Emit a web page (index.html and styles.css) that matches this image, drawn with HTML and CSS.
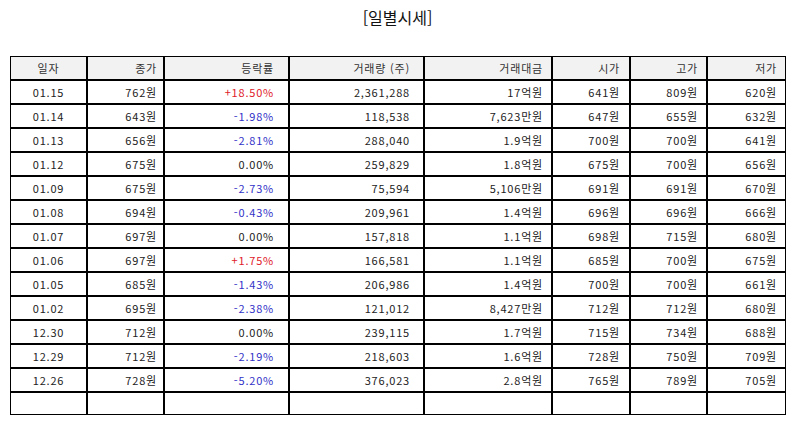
FILE: index.html
```html
<!DOCTYPE html>
<html lang="ko">
<head>
<meta charset="utf-8">
<title>일별시세</title>
<link rel="stylesheet" href="styles.css">
</head>
<body>
<div class="page">
  <h1 class="title">[일별시세]</h1>
  <table class="quotes">
    <colgroup>
      <col class="c-date"><col class="c-close"><col class="c-rate"><col class="c-vol">
      <col class="c-amt"><col class="c-open"><col class="c-high"><col class="c-low">
    </colgroup>
    <thead>
      <tr>
        <th>일자</th>
        <th>종가</th>
        <th>등락률</th>
        <th>거래량 (주)</th>
        <th>거래대금</th>
        <th>시가</th>
        <th>고가</th>
        <th>저가</th>
      </tr>
    </thead>
    <tbody>
      <tr><td>01.15</td><td>762원</td><td class="up">+18.50%</td><td>2,361,288</td><td>17억원</td><td>641원</td><td>809원</td><td>620원</td></tr>
      <tr><td>01.14</td><td>643원</td><td class="down">-1.98%</td><td>118,538</td><td>7,623만원</td><td>647원</td><td>655원</td><td>632원</td></tr>
      <tr><td>01.13</td><td>656원</td><td class="down">-2.81%</td><td>288,040</td><td>1.9억원</td><td>700원</td><td>700원</td><td>641원</td></tr>
      <tr><td>01.12</td><td>675원</td><td>0.00%</td><td>259,829</td><td>1.8억원</td><td>675원</td><td>700원</td><td>656원</td></tr>
      <tr><td>01.09</td><td>675원</td><td class="down">-2.73%</td><td>75,594</td><td>5,106만원</td><td>691원</td><td>691원</td><td>670원</td></tr>
      <tr><td>01.08</td><td>694원</td><td class="down">-0.43%</td><td>209,961</td><td>1.4억원</td><td>696원</td><td>696원</td><td>666원</td></tr>
      <tr><td>01.07</td><td>697원</td><td>0.00%</td><td>157,818</td><td>1.1억원</td><td>698원</td><td>715원</td><td>680원</td></tr>
      <tr><td>01.06</td><td>697원</td><td class="up">+1.75%</td><td>166,581</td><td>1.1억원</td><td>685원</td><td>700원</td><td>675원</td></tr>
      <tr><td>01.05</td><td>685원</td><td class="down">-1.43%</td><td>206,986</td><td>1.4억원</td><td>700원</td><td>700원</td><td>661원</td></tr>
      <tr><td>01.02</td><td>695원</td><td class="down">-2.38%</td><td>121,012</td><td>8,427만원</td><td>712원</td><td>712원</td><td>680원</td></tr>
      <tr><td>12.30</td><td>712원</td><td>0.00%</td><td>239,115</td><td>1.7억원</td><td>715원</td><td>734원</td><td>688원</td></tr>
      <tr><td>12.29</td><td>712원</td><td class="down">-2.19%</td><td>218,603</td><td>1.6억원</td><td>728원</td><td>750원</td><td>709원</td></tr>
      <tr><td>12.26</td><td>728원</td><td class="down">-5.20%</td><td>376,023</td><td>2.8억원</td><td>765원</td><td>789원</td><td>705원</td></tr>
      <tr class="empty"><td></td><td></td><td></td><td></td><td></td><td></td><td></td><td></td></tr>
    </tbody>
  </table>
</div>
</body>
</html>
```

FILE: styles.css
```css
html, body {
  margin: 0;
  padding: 0;
  background: #ffffff;
}

.page {
  padding: 6px 10px 0 10px;
  font-family: "Noto Sans CJK KR", "Noto Sans", sans-serif;
  color: #222222;
}

.title {
  margin: 0 0 28px 0;
  font-size: 16px;
  line-height: 22px;
  font-weight: normal;
  text-align: center;
  color: #111111;
}

.quotes {
  width: 776px;
  table-layout: fixed;
  border-collapse: separate;
  border-spacing: 0;
  border: 0;
  font-size: 11px;
  letter-spacing: 0.8px;
}

.c-date { width: 77px; }
.c-close { width: 77px; }
.c-rate { width: 125px; }
.c-vol { width: 135px; }
.c-amt { width: 128px; }
.c-open { width: 78px; }
.c-high { width: 77px; }
.c-low { width: 79px; }

.quotes th,
.quotes td {
  border: 1px solid #000000;
  height: 22px;
  line-height: 22px;
  padding: 0 8px 0 4px;
  text-align: right;
  white-space: nowrap;
  overflow: hidden;
}

.quotes th {
  font-weight: normal;
  background: #f2f2f2;
  color: #333333;
}

.quotes th:nth-child(1),
.quotes td:nth-child(1) {
  text-align: center;
  padding: 0 4px;
}

.quotes th:nth-child(2),
.quotes td:nth-child(2) {
  padding-right: 6px;
}

.quotes th:nth-child(3),
.quotes td:nth-child(3) {
  padding-right: 14px;
}

.quotes th:nth-child(4),
.quotes td:nth-child(4) {
  padding-right: 13px;
}

.quotes th:nth-child(6),
.quotes td:nth-child(6) {
  padding-right: 9px;
}

.quotes .up {
  color: #e0202a;
}

.quotes .down {
  color: #3232c8;
}

.quotes .empty td {
  height: 21px;
}
```
